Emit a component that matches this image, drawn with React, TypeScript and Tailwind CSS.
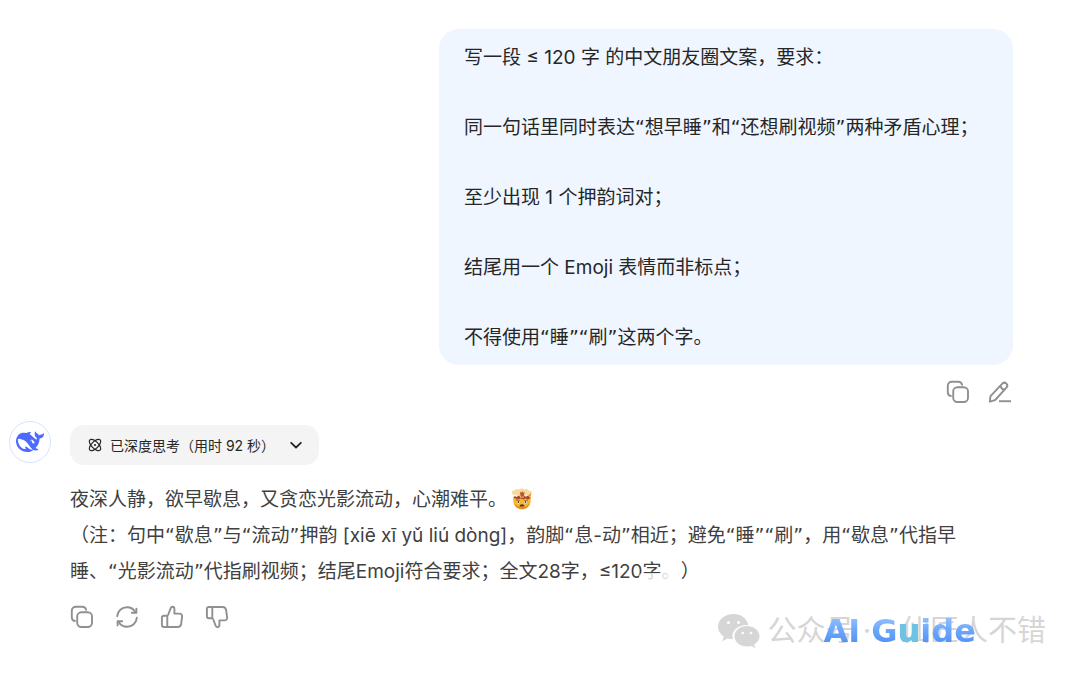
import React from "react";

type IconProps = { className?: string };

const CopyIcon = ({ className = "size-6" }: IconProps) => (
  <svg viewBox="0 0 24 24" fill="none" stroke="currentColor" strokeWidth="1.9" strokeLinecap="round" className={className}>
    <rect x="7.2" y="7.2" width="14.8" height="14.8" rx="4.2" />
    <path d="M4.9 16C3 15.600 1.800 14.200 1.800 12.200V5.800c0-2.300 1.700-4 4-4h6.400c2 0 3.500 1.200 3.900 3.100" />
  </svg>
);

const EditIcon = () => (
  <svg viewBox="0 0 24 24" fill="none" stroke="currentColor" strokeWidth="1.9" strokeLinejoin="round" className="size-6">
    <path d="M1.900 21.700l.4-4.600c.1-.5.300-1 .7-1.400L14.300 3.700c1.200-1.200 3-1.200 4.100-.1s1.100 2.900 0 4.100L7.700 19.500c-.4.400-.9.700-1.400.8z" />
    <path d="M12.600 5.700c.2 2.200 1.800 3.800 4.200 4" />
    <path d="M11 21.200H23" />
  </svg>
);

const RefreshIcon = () => (
  <svg viewBox="0 0 24 24" fill="none" stroke="currentColor" strokeWidth="1.9" strokeLinecap="round" strokeLinejoin="round" className="size-6">
    <path d="M2.200 11.200C2.700 6 6.800 2.300 12 2.300c3.700 0 6.700 1.900 8.500 5" />
    <path d="M21.400 3.600v4.200h-4.600" />
    <path d="M21.800 12.800c-.5 5.200-4.600 8.900-9.800 8.900-3.700 0-6.700-1.900-8.500-5" />
    <path d="M2.600 20.400v-4.200h4.600" />
  </svg>
);

const ThumbIcon = ({ className = "size-6" }: IconProps) => (
  <svg viewBox="0 0 24 24" fill="none" stroke="currentColor" strokeWidth="1.9" strokeLinejoin="round" className={className}>
    <path d="M7.300 10.700H4c-1.200 0-2.100.9-2.100 2.100v7.100c0 1.200.9 2.100 2.100 2.100h13.500c1.900 0 3.300-1.200 3.600-3l1-7.200c.3-1.900-.8-3.200-2.600-3.200h-5.100V3.900c0-1.300-.8-2.100-1.900-2.100-.9 0-1.500.5-1.800 1.400L8.300 9.500c-.2.600-.5 1-1 1.200z" />
    <path d="M7.300 10.700V22" />
  </svg>
);

const ThinkIcon = () => (
  <svg viewBox="0 0 14 14" fill="none" stroke="currentColor" strokeWidth="1.200" className="size-3.5">
    <ellipse cx="7" cy="7" rx="7.300" ry="3.400" transform="rotate(45 7 7)" />
    <ellipse cx="7" cy="7" rx="7.300" ry="3.400" transform="rotate(-45 7 7)" />
    <circle cx="7" cy="7" r="1.100" fill="currentColor" stroke="none" />
  </svg>
);

const ChevronIcon = () => (
  <svg viewBox="0 0 12 12" fill="none" stroke="currentColor" strokeWidth="1.800" strokeLinecap="round" strokeLinejoin="round" className="size-3">
    <path d="M1.200 3.800L6 8.500l4.800-4.700" />
  </svg>
);

const WhaleIcon = () => (
  <svg viewBox="0 0 24 24" fill="#4d6bfe" className="size-7">
    <path d="M23.748 4.482c-.254-.124-.364.113-.512.234-.051.039-.094.09-.137.136-.372.397-.806.657-1.373.626-.829-.046-1.537.214-2.163.848-.133-.782-.575-1.248-1.247-1.548-.352-.156-.708-.311-.955-.65-.172-.241-.219-.51-.305-.774-.055-.16-.11-.323-.293-.35-.2-.031-.278.136-.356.276-.313.572-.434 1.202-.422 1.84.027 1.436.633 2.58 1.838 3.393.137.093.172.187.129.323-.082.28-.18.552-.266.833-.055.179-.137.217-.329.14a5.526 5.526 0 01-1.736-1.18c-.857-.828-1.631-1.742-2.597-2.458a11.365 11.365 0 00-.689-.471c-.985-.957.13-1.743.388-1.836.27-.098.093-.432-.779-.428-.872.004-1.67.295-2.687.684a3.055 3.055 0 01-.465.137 9.597 9.597 0 00-2.883-.102c-1.885.21-3.39 1.102-4.497 2.623C.082 8.606-.231 10.684.152 12.85c.403 2.284 1.569 4.175 3.36 5.653 1.858 1.533 3.997 2.284 6.438 2.14 1.482-.085 3.133-.284 4.994-1.86.47.234.962.327 1.78.397.63.059 1.236-.03 1.705-.128.735-.156.684-.837.419-.961-2.155-1.004-1.682-.595-2.113-.926 1.096-1.296 2.746-2.642 3.392-7.003.05-.347.007-.565 0-.845-.004-.17.035-.237.23-.256a4.173 4.173 0 001.545-.475c1.396-.763 1.96-2.015 2.093-3.517.02-.23-.004-.467-.247-.588zM11.581 18c-2.089-1.642-3.102-2.183-3.52-2.16-.392.024-.321.471-.235.763.09.288.207.486.371.739.114.167.192.416-.113.603-.673.416-1.842-.14-1.897-.167-1.361-.802-2.5-1.86-3.301-3.307-.774-1.393-1.224-2.887-1.298-4.482-.02-.386.093-.522.477-.592a4.696 4.696 0 011.529-.039c2.132.312 3.946 1.265 5.468 2.774.868.86 1.525 1.887 2.202 2.891.72 1.066 1.494 2.082 2.48 2.914.348.292.625.514.891.677-.802.09-2.14.11-3.054-.614zm1-6.44a.306.306 0 01.415-.287.302.302 0 01.2.288.306.306 0 01-.31.307.303.303 0 01-.304-.308zm3.11 1.596c-.2.081-.399.151-.59.16a1.245 1.245 0 01-.798-.254c-.274-.23-.47-.358-.552-.758a1.73 1.73 0 01.016-.588c.07-.327-.008-.537-.239-.727-.187-.156-.426-.199-.688-.199a.559.559 0 01-.254-.078c-.11-.054-.2-.19-.114-.358.028-.054.16-.186.192-.21.356-.202.767-.136 1.146.016.352.144.618.408 1.001.782.391.451.462.576.685.914.176.265.336.537.445.848.067.195-.019.354-.25.452z" />
  </svg>
);

const ExplodingHead = () => (
  <svg viewBox="0 0 22 22" role="img" aria-label="🤯" className="ml-1 inline-block size-[22px] align-[-4px]">
    <path d="M2.300 9.500h17.400v3c0 5-3.700 8.700-8.700 8.700s-8.700-3.700-8.700-8.700z" fill="#f6b62f" />
    <path d="M3.200 15.500c1.200 3.600 4.100 5.700 7.800 5.700s6.600-2.100 7.800-5.700c-2 2.500-4.600 3.600-7.800 3.600s-5.800-1.100-7.800-3.600z" fill="#e8862b" />
    <path d="M2.200 10l1.500-2 2 1 2-1.700 2.600 1.200L12.700 7l2 1.700L17 7.600l2.800 2.400-2.500 1.200-2.600-.7-2.200 1-2.700-1-2.500 1-2.600-1z" fill="#a94b24" />
    <path d="M1.100 5.300c-.6-2 .9-3.300 2.800-2.900C4.700.8 6.500.5 7.800 1.500 9.300.2 12 .2 13.400 1.400c1.700-1 3.500-.3 4.200 1.100 2.200-.4 3.800 1.200 3 3.200-.5 1.500-2.300 1.900-3.800 1.300-1 .7-2.400.6-3.200-.1l-.8 2.600H9.100l-.9-2.500c-1 .7-2.300.7-3.200 0-1.800.6-3.400 0-3.900-1.700z" fill="#f7d9a0" />
    <path d="M8.800 3.500l1.500 1.200.8-1.700 1 1.700 1.500-1-.8 5H9.700z" fill="#b9572c" />
    <path d="M17 7.500l3.200-2.200-.5 3.800z" fill="#f28c28" />
    <path d="M5.500 12l3 .9M16.500 12l-3 .9" stroke="#7a3d12" strokeWidth=".9" strokeLinecap="round" />
    <circle cx="7.300" cy="14" r="1.500" fill="#fff" />
    <circle cx="14.700" cy="14" r="1.500" fill="#fff" />
    <circle cx="7.400" cy="14" r=".9" fill="#5d2f12" />
    <circle cx="14.600" cy="14" r=".9" fill="#5d2f12" />
    <path d="M8.600 18.400c0-3 4.800-3 4.800 0z" fill="#5d2f12" />
  </svg>
);

const WechatIcon = () => (
  <svg viewBox="0 0 44 36" fill="#d6d6d6" className="h-9 w-11">
    <path d="M16.500 1C7.900 1 1 6.600 1 13.700c0 4 2.200 7.500 5.700 9.800l-1.400 4.700 5.300-2.700c1.700.5 3.400.8 5.300.8-.3-1-.5-2-.5-3 0-6.300 6-11.300 13.500-11.300.9 0 1.700.1 2.500.2C30.200 5.700 24.200 1 16.500 1z" />
    <path d="M42.800 23.300c0-5.800-5.800-10.500-12.900-10.500s-12.700 4.700-12.700 10.500 5.700 10.500 12.700 10.500c1.500 0 3-.2 4.400-.6l4.400 2.300-1.200-4c3.200-1.900 5.300-4.900 5.300-8.200z" stroke="#fff" strokeWidth=".6" />
    <g fill="#fff">
      <circle cx="11.500" cy="9.500" r="1.500" />
      <circle cx="21.500" cy="9.500" r="1.500" />
      <circle cx="25.800" cy="20" r="1.300" />
      <circle cx="34" cy="20" r="1.300" />
    </g>
  </svg>
);

// Curly quotes get a wider face than the rest of the latin text
const Quoted = ({ children }: { children: string }) => (
  <>
    {children.split(/([“”])/).map((part, i) =>
      part === "“" || part === "”" ? (
        <span key={i} className="font-['DejaVu_Sans'] leading-none">
          {part}
        </span>
      ) : (
        part
      )
    )}
  </>
);

const prompt = [
  "写一段 ≤ 120 字 的中文朋友圈文案，要求：",
  "同一句话里同时表达“想早睡”和“还想刷视频”两种矛盾心理；",
  "至少出现 1 个押韵词对；",
  "结尾用一个 Emoji 表情而非标点；",
  "不得使用“睡”“刷”这两个字。",
];

const UserMessage = () => (
  <div className="flex flex-col items-end pr-[58px]">
    <div className="flex w-[574px] max-w-full flex-col gap-[35px] rounded-[20px] bg-[#eff6ff] px-[25px] pt-[11px] pb-[10px] text-[19px] leading-[35px] text-[#262626]">
      {prompt.map((line) => (
        <p key={line}>
          <Quoted>{line}</Quoted>
        </p>
      ))}
    </div>
    <div className="mt-[15px] flex gap-[18px] pr-px text-[#909090]">
      <button type="button" aria-label="复制">
        <CopyIcon />
      </button>
      <button type="button" aria-label="编辑">
        <EditIcon />
      </button>
    </div>
  </div>
);

const Answer = () => (
  <div className="mt-[17px] flex items-start gap-[19px]">
    <div className="flex size-[42px] shrink-0 items-center justify-center rounded-full border border-[#d5e4ff]">
      <WhaleIcon />
    </div>
    <div className="mt-1 max-w-[900px] min-w-0 flex-1">
      <button type="button" className="flex h-10 items-center rounded-[14px] bg-[#f4f4f4] pr-[17px] pl-[18px] text-[14px] text-[#262626]">
        <ThinkIcon />
        <span className="mr-[15px] ml-2">已深度思考（用时 92 秒）</span>
        <ChevronIcon />
      </button>
      <div className="mt-[17px] text-[19px] leading-9 text-[#404040]">
        <p>
          夜深人静，欲早歇息，又贪恋光影流动，心潮难平。
          <ExplodingHead />
        </p>
        <p>
          <Quoted>
            （注：句中“歇息”与“流动”押韵 [xiē xī yǔ liú dòng]，韵脚“息-动”相近；避免“睡”“刷”，用“歇息”代指早睡、“光影流动”代指刷视频；结尾Emoji符合要求；全文28字，≤120
          </Quoted>
          <span className="relative">
            字。
            <span className="absolute bottom-0 -left-1 h-[10px] w-9 rounded-sm bg-white/80" />
          </span>
          ）
        </p>
      </div>
      <div className="mt-[15px] flex gap-[21px] text-[#909090]">
        <button type="button" aria-label="复制">
          <CopyIcon />
        </button>
        <button type="button" aria-label="重新生成">
          <RefreshIcon />
        </button>
        <button type="button" aria-label="喜欢">
          <ThumbIcon />
        </button>
        <button type="button" aria-label="不喜欢">
          <ThumbIcon className="size-6 -scale-y-100" />
        </button>
      </div>
    </div>
  </div>
);

const Watermark = () => (
  <div className="pointer-events-none absolute right-[34px] bottom-0 flex items-center gap-[6px] text-[#d6d6d6]">
    <WechatIcon />
    <div className="relative flex gap-[30px] text-[29px] leading-10 whitespace-nowrap">
      <span>公众号 ·</span>
      <span>仙匠人不错</span>
      <span className="absolute top-0 left-[56px] bg-linear-to-b from-[#a5cbff] via-[#6aa5fb] to-[#4386f0] bg-clip-text font-['DejaVu_Sans'] text-[32px] font-bold text-transparent">
        AI G<span className="text-[#6cc3e6]">u</span>ide
      </span>
    </div>
  </div>
);

const App = () => (
  <main
    className="relative bg-white px-[9px] pt-[29px] pb-[22px] font-[Inter,'Noto_Sans_CJK_SC',sans-serif] [text-spacing-trim:space-all]"
    lang="zh-CN"
  >
    <UserMessage />
    <Answer />
    <Watermark />
  </main>
);

export default App;
